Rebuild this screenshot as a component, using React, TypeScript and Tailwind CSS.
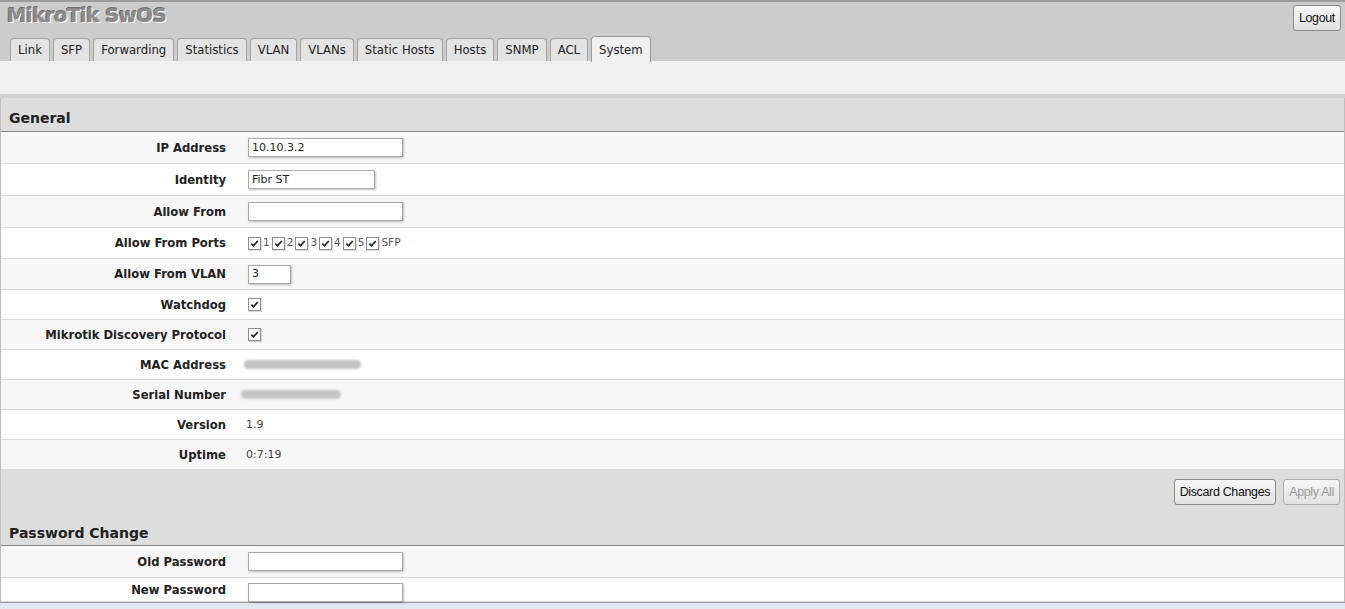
import type { ReactNode } from "react";

const tabs = ["Link", "SFP", "Forwarding", "Statistics", "VLAN", "VLANs", "Static Hosts", "Hosts", "SNMP", "ACL", "System"];

function Check() {
  return (
    <span className="inline-flex h-[13px] w-[13px] items-center justify-center border border-[#8e8f8f] bg-white shadow-[1px_1px_1px_rgba(0,0,0,0.15)]">
      <svg viewBox="0 0 10 10" className="h-[9px] w-[9px]">
        <path d="M1.5 5.2 L3.9 7.6 L8.6 2.2" fill="none" stroke="#222" strokeWidth="1.9" />
      </svg>
    </span>
  );
}

function TextBox({ value = "", width }: { value?: string; width: string }) {
  return (
    <div
      className={`${width} flex h-[19px] items-center border border-[#a9a9a9] bg-white px-[3px] text-[11px] text-[#222] shadow-[1px_1px_2px_rgba(0,0,0,0.25)]`}
    >
      {value}
    </div>
  );
}

function Row({ label, children, odd, h }: { label: string; children: ReactNode; odd: boolean; h: string }) {
  return (
    <div className={`flex ${h} items-center border-b border-[#dcdcdc] ${odd ? "bg-[#f7f7f7]" : "bg-white"}`}>
      <div className="w-[225px] shrink-0 pt-[1px] text-right text-[11.6px] font-bold text-[#222]">{label}</div>
      <div className="flex items-center pl-[22px] text-[11px] text-[#444]">{children}</div>
    </div>
  );
}

function Blur({ width }: { width: string }) {
  return <div className={`${width} h-[9px] rounded-full bg-[#c4c4c4] blur-[1px]`} />;
}

function Button({ children, disabled }: { children: ReactNode; disabled?: boolean }) {
  return (
    <button
      type="button"
      className={`h-[26px] rounded-[3px] border border-[#8a8a8a] bg-gradient-to-b from-[#f6f6f6] to-[#e2e2e2] px-[5px] text-[12.4px] tracking-[-0.3px] ${
        disabled ? "border-[#adadad] text-[#9a9a9a]" : "text-[#111]"
      }`}
      style={{ fontFamily: '"Liberation Sans", Arial, sans-serif' }}
    >
      {children}
    </button>
  );
}

export default function App() {
  const ports = ["1", "2", "3", "4", "5", "SFP"];
  return (
    <div
      className="h-[609px] w-[1345px] overflow-hidden bg-white"
      style={{ fontFamily: '"DejaVu Sans", Verdana, sans-serif' }}
    >
      {/* header */}
      <div className="border-t-2 border-[#9c9c9c] bg-[#cccccc]">
        <div className="flex items-start justify-between">
          <div className="pl-[7px] pt-[1px] text-[19.5px] font-bold leading-[25px] tracking-[-0.4px] text-[#8c8c8c] [text-shadow:1px_1px_0_#fff,-1px_0_0_#6f6f6f,0_-1px_0_#6f6f6f]">
            MikroTik SwOS
          </div>
          <div className="pr-[4px] pt-[3px]">
            <Button>Logout</Button>
          </div>
        </div>
        <div className="flex items-end gap-[3px] pl-[10px] pt-[4px]">
          {tabs.map((t) => {
            const active = t === "System";
            return (
              <div
                key={t}
                className={`rounded-t-[4px] border border-b-0 px-[7px] text-[11.7px] text-[#222] ${
                  active
                    ? "relative top-[1px] h-[26px] border-[#9a9a9a] bg-[#f0f0f0] pt-[5px]"
                    : "h-[23px] border-[#a3a3a3] bg-[#e3e3e3] pt-[3px]"
                }`}
              >
                {t}
              </div>
            );
          })}
        </div>
      </div>
      <div className="h-[33px] bg-[#f0f0f0]" />
      <div className="h-[4px] bg-[#d2d2d2]" />

      <div className="border-x border-[#bdbdbd]">
        {/* General */}
        <div className="flex h-[34px] items-end border-b border-[#8a8a8a] bg-[#dddddd] pb-[2px] pl-[8px] text-[14px] font-bold text-[#222]">
          General
        </div>
        <Row label="IP Address" odd h="h-[32px]">
          <TextBox value="10.10.3.2" width="w-[155px]" />
        </Row>
        <Row label="Identity" odd={false} h="h-[32px]">
          <TextBox value="Fibr ST" width="w-[127px]" />
        </Row>
        <Row label="Allow From" odd h="h-[32px]">
          <TextBox width="w-[155px]" />
        </Row>
        <Row label="Allow From Ports" odd={false} h="h-[31px]">
          <div className="flex items-center gap-[2px]">
            {ports.map((p) => (
              <span key={p} className="flex items-center gap-[2px]">
                <Check />
                <span className="text-[10.5px] text-[#555]">{p}</span>
              </span>
            ))}
          </div>
        </Row>
        <Row label="Allow From VLAN" odd h="h-[31px]">
          <TextBox value="3" width="w-[43px]" />
        </Row>
        <Row label="Watchdog" odd={false} h="h-[30px]">
          <Check />
        </Row>
        <Row label="Mikrotik Discovery Protocol" odd h="h-[30px]">
          <Check />
        </Row>
        <Row label="MAC Address" odd={false} h="h-[30px]">
          <div className="-ml-[4px]">
            <Blur width="w-[117px]" />
          </div>
        </Row>
        <Row label="Serial Number" odd h="h-[30px]">
          <div className="-ml-[7px]">
            <Blur width="w-[100px]" />
          </div>
        </Row>
        <Row label="Version" odd={false} h="h-[30px]">
          <span className="-ml-[2px]">1.9</span>
        </Row>
        <Row label="Uptime" odd h="h-[30px]">
          <span className="-ml-[2px]">0:7:19</span>
        </Row>

        {/* actions + Password Change */}
        <div className="border-b border-[#8a8a8a] bg-[#dddddd]">
          <div className="flex justify-end gap-[7px] pr-[4px] pt-[9px]">
            <Button>Discard Changes</Button>
            <Button disabled>Apply All</Button>
          </div>
          <div className="flex h-[40px] items-end pb-[1px] pl-[8px] text-[14px] font-bold text-[#222]">
            Password Change
          </div>
        </div>
        <Row label="Old Password" odd h="h-[32px]">
          <TextBox width="w-[155px]" />
        </Row>
        <Row label="New Password" odd={false} h="h-[24px]">
          <div className="pt-[6px]">
            <TextBox width="w-[155px]" />
          </div>
        </Row>
      </div>
      <div className="h-[10px] border-t border-[#9a9a9a] bg-[#e3e7ef]" />
    </div>
  );
}
